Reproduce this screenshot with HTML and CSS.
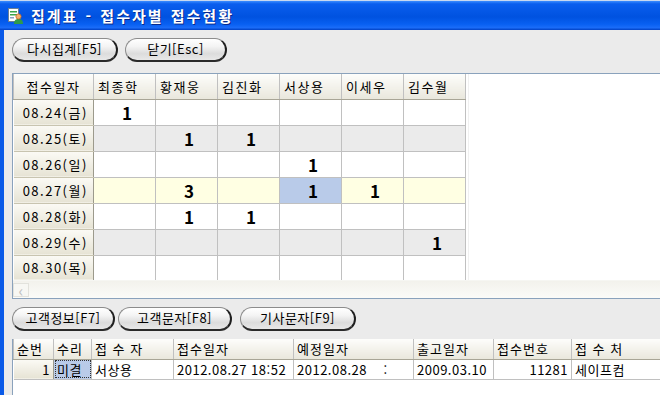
FILE: index.html
```html
<!DOCTYPE html>
<html lang="ko">
<head>
    <meta charset="UTF-8">
    <title>집계표 - 접수자별 접수현황</title>
    <link rel="stylesheet" href="styles.css">
</head>
<body>
    <div class="window">
        <!-- 타이틀바 -->
        <div class="titlebar">
            <svg class="app-icon" width="16" height="16" viewBox="0 0 16 16">
                <rect x="1.5" y="0.5" width="10" height="13" fill="#fff" stroke="#6b7f96"/>
                <rect x="3" y="3" width="7" height="1.5" fill="#3aa64a"/>
                <rect x="3" y="6" width="7" height="1.5" fill="#3aa64a"/>
                <rect x="3" y="9" width="4" height="1.5" fill="#8aa0c0"/>
                <path d="M7 16 C7 12 9 11 11.5 11 C14 11 16 12 16 16 Z" fill="#2f9a4a"/>
                <circle cx="11.5" cy="8.5" r="2.6" fill="#f2b070" stroke="#c96a20" stroke-width="0.8"/>
            </svg>
            <span class="title">집계표 - 접수자별 접수현황</span>
        </div>

        <div class="client">
            <!-- 상단 버튼 -->
            <div class="toolbar">
                <button class="pill w106">다시집계[F5]</button>
                <button class="pill w102">닫기[Esc]</button>
            </div>

            <!-- 집계 그리드 -->
            <div class="sheet-panel">
                <div class="sheet-area">
                    <table class="sheet">
                        <colgroup>
                            <col style="width: 80px">
                            <col style="width: 62px"><col style="width: 62px"><col style="width: 62px">
                            <col style="width: 62px"><col style="width: 62px"><col style="width: 62px">
                        </colgroup>
                        <thead>
                            <tr>
                                <th class="corner">접수일자</th>
                                <th>최종학</th><th>황재웅</th><th>김진화</th>
                                <th>서상용</th><th>이세우</th><th>김수월</th>
                            </tr>
                        </thead>
                        <tbody>
                            <tr class="odd">
                                <td class="day">08.24(금)</td>
                                <td>1</td><td></td><td></td><td></td><td></td><td></td>
                            </tr>
                            <tr class="even">
                                <td class="day">08.25(토)</td>
                                <td></td><td>1</td><td>1</td><td></td><td></td><td></td>
                            </tr>
                            <tr class="odd">
                                <td class="day">08.26(일)</td>
                                <td></td><td></td><td></td><td>1</td><td></td><td></td>
                            </tr>
                            <tr class="current">
                                <td class="day">08.27(월)</td>
                                <td></td><td>3</td><td></td><td class="selected">1</td><td>1</td><td></td>
                            </tr>
                            <tr class="odd">
                                <td class="day">08.28(화)</td>
                                <td></td><td>1</td><td>1</td><td></td><td></td><td></td>
                            </tr>
                            <tr class="even">
                                <td class="day">08.29(수)</td>
                                <td></td><td></td><td></td><td></td><td></td><td>1</td>
                            </tr>
                            <tr class="odd">
                                <td class="day">08.30(목)</td>
                                <td></td><td></td><td></td><td></td><td></td><td></td>
                            </tr>
                        </tbody>
                    </table>
                    <div class="sheet-rest"></div>
                </div>
                <div class="hscroll">
                    <span class="arrow">&lsaquo;</span>
                </div>
            </div>

            <!-- 하단 버튼 -->
            <div class="toolbar second">
                <button class="pill w103">고객정보[F7]</button>
                <button class="pill w114">고객문자[F8]</button>
                <button class="pill w116 gap">기사문자[F9]</button>
            </div>

            <!-- 접수 목록 -->
            <div class="list-panel">
                <table class="list">
                    <colgroup>
                        <col style="width: 40px"><col style="width: 38px"><col style="width: 82px">
                        <col style="width: 120px"><col style="width: 120px"><col style="width: 80px">
                        <col style="width: 78px"><col style="width: 90px">
                    </colgroup>
                    <thead>
                        <tr>
                            <th>순번</th><th>수리</th><th>접 수 자</th><th>접수일자</th>
                            <th>예정일자</th><th>출고일자</th><th>접수번호</th><th>접 수 처</th>
                        </tr>
                    </thead>
                    <tbody>
                        <tr>
                            <td class="num head">1</td>
                            <td class="focus">미결</td>
                            <td>서상용</td>
                            <td>2012.08.27 18:52</td>
                            <td class="pre">2012.08.28    :</td>
                            <td>2009.03.10</td>
                            <td class="num">11281</td>
                            <td>세이프컴</td>
                        </tr>
                    </tbody>
                </table>
            </div>
        </div>
    </div>
</body>
</html>
```

FILE: styles.css
```css
/* 기본 */
body {
    margin: 0;
    font-family: "Noto Sans CJK KR", "Noto Sans", sans-serif;
    font-size: 13px;
    color: #000;
    background: #ebebeb;
}

.window {
    width: 660px;
    height: 395px;
    overflow: hidden;
    display: flex;
    flex-direction: column;
}

/* 타이틀바 */
.titlebar {
    height: 30px;
    flex: none;
    display: flex;
    align-items: center;
    gap: 8px;
    padding-left: 7px;
    box-sizing: border-box;
    border-top: 1px solid #c8d8f0;
    background: linear-gradient(#3a8cff 0, #0a5eee 10%, #0052e0 55%, #0860f2 80%, #1a6cf8 92%, #0040c4 100%);
}

.app-icon {
    flex: none;
}

.title {
    color: #fff;
    font-weight: bold;
    font-size: 15px;
    letter-spacing: 2px;
    word-spacing: 1px;
    text-shadow: 1px 1px 0 #0a2a8a;
}

/* 본문 */
.client {
    flex: 1;
    display: flex;
    flex-direction: column;
    border-left: 4px solid #0a5ae8;
    padding-left: 8px;
    background: #ebebeb;
    min-height: 0;
}

.toolbar {
    height: 43px;
    flex: none;
    display: flex;
    align-items: flex-start;
    gap: 7px;
    padding-top: 8px;
    box-sizing: border-box;
}

.toolbar.second {
    height: 40px;
    gap: 3px;
}

.toolbar .gap {
    margin-left: 5px;
}

/* 둥근 버튼 */
.pill {
    height: 24px;
    padding: 0 0 2px;
    border: 1px solid #8c8c8c;
    border-right: 2px solid #1e1e1e;
    border-bottom: 2px solid #2a2a2a;
    border-radius: 12px;
    background: linear-gradient(#ffffff 0, #f4f4f4 35%, #dcdcdc 70%, #e8e8e8 100%);
    font-family: inherit;
    font-size: 13px;
    letter-spacing: 0.5px;
    color: #000;
    box-sizing: border-box;
}

.w102 { width: 102px; }
.w103 { width: 103px; }
.w106 { width: 106px; }
.w114 { width: 114px; }
.w116 { width: 116px; }

/* 집계 그리드 */
.sheet-panel {
    height: 226px;
    flex: none;
    display: flex;
    flex-direction: column;
    border-top: 1px solid #8aa2bc;
    border-left: 1px solid #8aa2bc;
    border-bottom: 1px solid #8aa2bc;
    background: #fff;
    box-sizing: border-box;
}

.sheet-area {
    flex: 1;
    display: flex;
    min-height: 0;
}

.sheet-rest {
    flex: 1;
    margin-left: 2px;
    border-left: 1px solid #f0f0f0;
}

table {
    border-collapse: collapse;
    table-layout: fixed;
}

.sheet {
    width: 452px;
}

.sheet th,
.sheet td {
    height: 25px;
    padding: 0;
    border: 1px solid #c0c0c0;
    box-sizing: border-box;
}

.sheet th {
    font-weight: normal;
    text-align: left;
    padding-left: 4px;
    letter-spacing: 1.5px;
    background: linear-gradient(#fdfdfb, #e9e7dc);
    border-top: none;
    border-bottom: 1px solid #a8a596;
}

.sheet th.corner {
    text-align: center;
    padding-left: 0;
}

.sheet td {
    text-align: center;
    padding-left: 5px;
    font-size: 17px;
    font-weight: bold;
}

.sheet td.day {
    font-size: 13px;
    font-weight: normal;
    letter-spacing: 1.5px;
    padding-left: 4px;
    background: linear-gradient(#fbfaf5, #e6e3d4);
    border-left: none;
    border-right: 1px solid #9c9a8c;
    border-bottom: 1px solid #c8c4b0;
}

.sheet tr.odd td { background-color: #fff; }
.sheet tr.even td { background-color: #ebebeb; }
.sheet tr.current td { background-color: #ffffe3; }
.sheet tr td.day { background-color: transparent; }
.sheet tr td.selected { background-color: #b9cbe9; }

/* 가로 스크롤 */
.hscroll {
    height: 17px;
    flex: none;
    display: flex;
    align-items: center;
    background: linear-gradient(#f3f2ec, #fbfbf8);
    border-top: 1px solid #f6f6f2;
}

.arrow {
    width: 16px;
    height: 14px;
    line-height: 12px;
    text-align: center;
    color: #c0c0c0;
    font-size: 16px;
    border: 1px solid #e2e2dc;
    background: #f7f7f3;
    box-sizing: border-box;
}

/* 접수 목록 */
.list-panel {
    flex: 1;
    background: #fff;
    border-left: 1px solid #8aa2bc;
}

.list {
    width: 648px;
}

.list th,
.list td {
    height: 20px;
    padding: 0 3px;
    border: 1px solid #c0c0c0;
    white-space: nowrap;
    overflow: hidden;
    box-sizing: border-box;
    text-align: left;
    font-size: 13px;
}

.list th {
    font-weight: normal;
    letter-spacing: 1px;
    border-top: none;
    background: linear-gradient(#fdfdfb, #e9e7dc);
    border-bottom: 1px solid #a8a596;
}

.list td {
    letter-spacing: 0.5px;
}

.list td.num {
    text-align: right;
}

.list td.head {
    background: linear-gradient(#fbfaf5, #e6e3d4);
    border-right: 1px solid #9c9a8c;
    border-left: none;
}

.list td.focus {
    background: #b9cbe9;
    outline: 1px dotted #333;
    outline-offset: -2px;
}

.list td.pre {
    white-space: pre;
}
```
